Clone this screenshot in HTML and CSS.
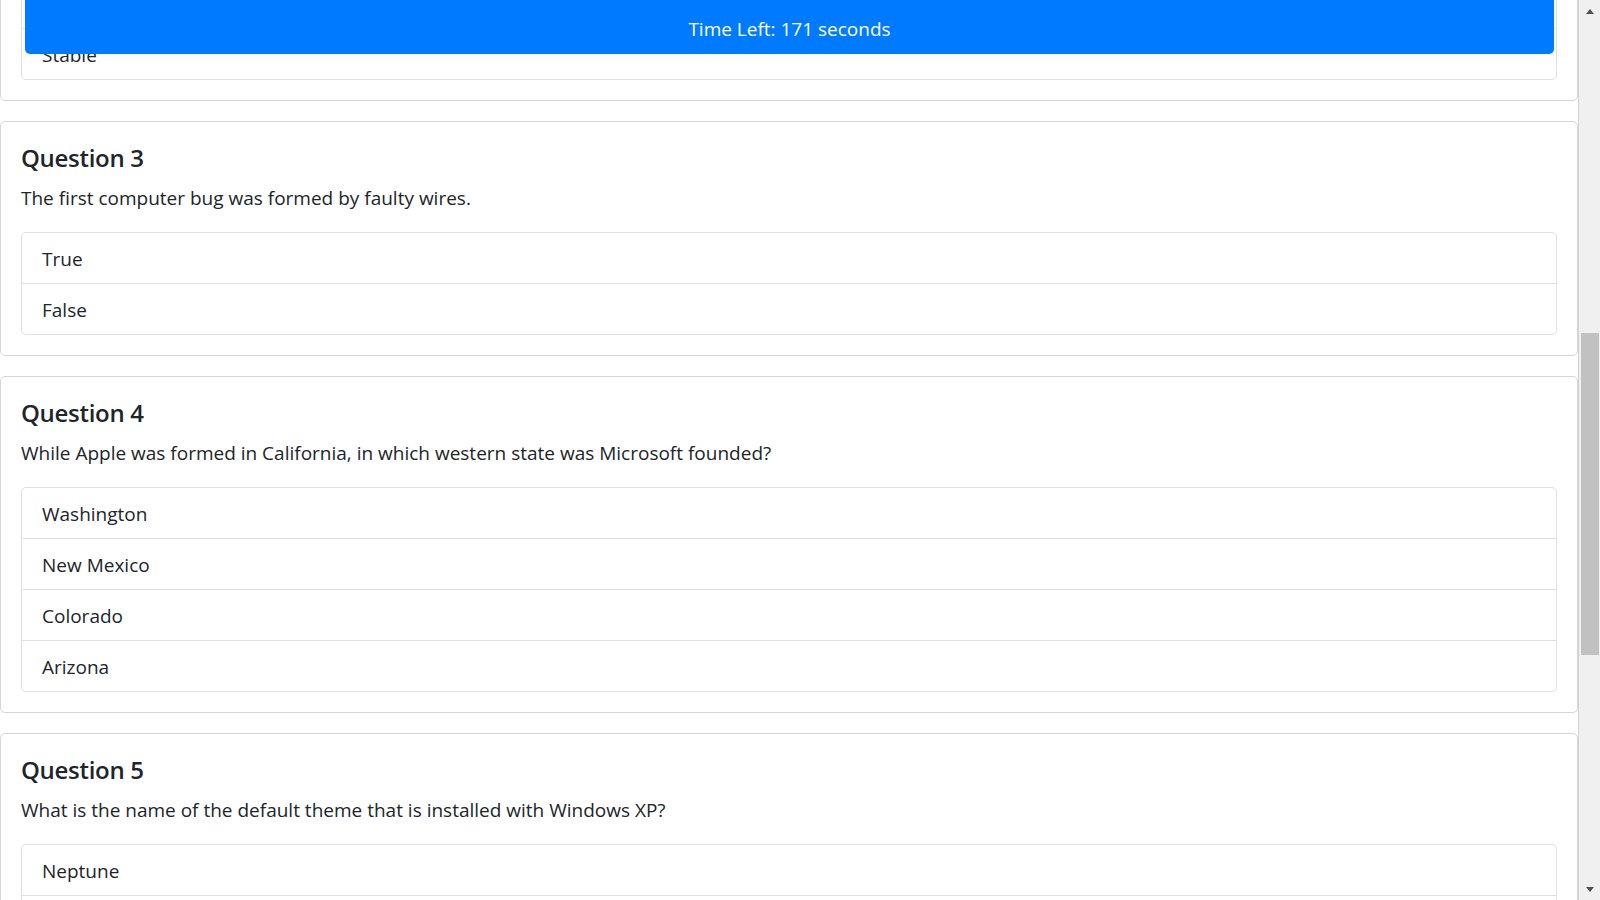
FILE: index.html
```html
<!DOCTYPE html>
<html lang="en">
<head>
<meta charset="utf-8">
<title>Quiz</title>
<link rel="stylesheet" href="styles.css">
</head>
<body>
<div class="page">
  <main class="content">
    <div class="feed">
      <section class="card">
        <h3 class="q-title">Question 2</h3>
        <p class="q-text">In Linux, which branch of the kernel is recommended for production use?</p>
        <ul class="options">
          <li class="option">Mainline</li>
          <li class="option">Longterm</li>
          <li class="option">linux-next</li>
          <li class="option">Stable</li>
        </ul>
      </section>
      <section class="card">
        <h3 class="q-title">Question 3</h3>
        <p class="q-text">The first computer bug was formed by faulty wires.</p>
        <ul class="options">
          <li class="option">True</li>
          <li class="option">False</li>
        </ul>
      </section>
      <section class="card">
        <h3 class="q-title">Question 4</h3>
        <p class="q-text">While Apple was formed in California, in which western state was Microsoft founded?</p>
        <ul class="options">
          <li class="option">Washington</li>
          <li class="option">New Mexico</li>
          <li class="option">Colorado</li>
          <li class="option">Arizona</li>
        </ul>
      </section>
      <section class="card">
        <h3 class="q-title">Question 5</h3>
        <p class="q-text">What is the name of the default theme that is installed with Windows XP?</p>
        <ul class="options">
          <li class="option">Neptune</li>
          <li class="option">Luna</li>
          <li class="option">Whistler</li>
          <li class="option">Bliss</li>
        </ul>
      </section>
    </div>
    <div class="timer">Time Left: 171 seconds</div>
  </main>
  <aside class="scrollbar">
    <div class="sb-btn"><span class="arrow-up"></span></div>
    <div class="sb-track"><div class="sb-thumb"></div></div>
    <div class="sb-btn"><span class="arrow-down"></span></div>
  </aside>
</div>
</body>
</html>
```
FILE: styles.css
```css
* { box-sizing: border-box; }
html, body {
  margin: 0;
  padding: 0;
  height: 900px;
  overflow: hidden;
  background: #fff;
}
body {
  font-family: "Open Sans", "Noto Sans", "Liberation Sans", sans-serif;
  color: #212529;
  font-size: 19px;
}
.page {
  display: flex;
  width: 1600px;
  height: 900px;
}
.content {
  width: 1578px;
  height: 900px;
  overflow: hidden;
  position: relative;
}
.feed {
  margin-top: -236px;
  display: flex;
  flex-direction: column;
  gap: 20px;
}
.card {
  border: 1px solid #d6d6d6;
  border-radius: 5px;
  padding: 20px;
  background: #fff;
}
.q-title {
  margin: 0 0 11px;
  font-size: 24px;
  line-height: 32px;
  font-weight: 600;
  letter-spacing: -0.3px;
  color: #212529;
}
.q-text {
  margin: 0 0 20px;
  font-size: 19px;
  line-height: 27px;
}
.options {
  list-style: none;
  margin: 0;
  padding: 0;
  border: 1px solid #dfe0e3;
  border-radius: 5px;
}
.option {
  padding: 13px 20px 11px;
  line-height: 26px;
  font-size: 19px;
  border-bottom: 1px solid #dfe0e3;
}
.option:last-child { border-bottom: 0; }
.timer {
  position: fixed;
  top: -6px;
  left: 25px;
  width: 1529px;
  height: 60px;
  padding-top: 10px;
  display: flex;
  align-items: center;
  justify-content: center;
  background: #007bff;
  color: #fff;
  font-size: 19px;
  border-radius: 5px;
}
.scrollbar {
  width: 22px;
  height: 900px;
  background: #f0f0f0;
  border-left: 1px solid #d2d2d2;
  display: flex;
  flex-direction: column;
}
.sb-btn {
  height: 22px;
  display: flex;
  align-items: center;
  justify-content: center;
}
.sb-track {
  flex: 1;
  padding: 0 1px 0 2px;
}
.sb-thumb {
  margin-top: 311px;
  height: 322px;
  background: #c1c1c1;
}
.arrow-up, .arrow-down {
  width: 0;
  height: 0;
  border-left: 4.5px solid transparent;
  border-right: 4.5px solid transparent;
}
.arrow-up { border-bottom: 5px solid #505050; }
.arrow-down { border-top: 5px solid #505050; }
```
